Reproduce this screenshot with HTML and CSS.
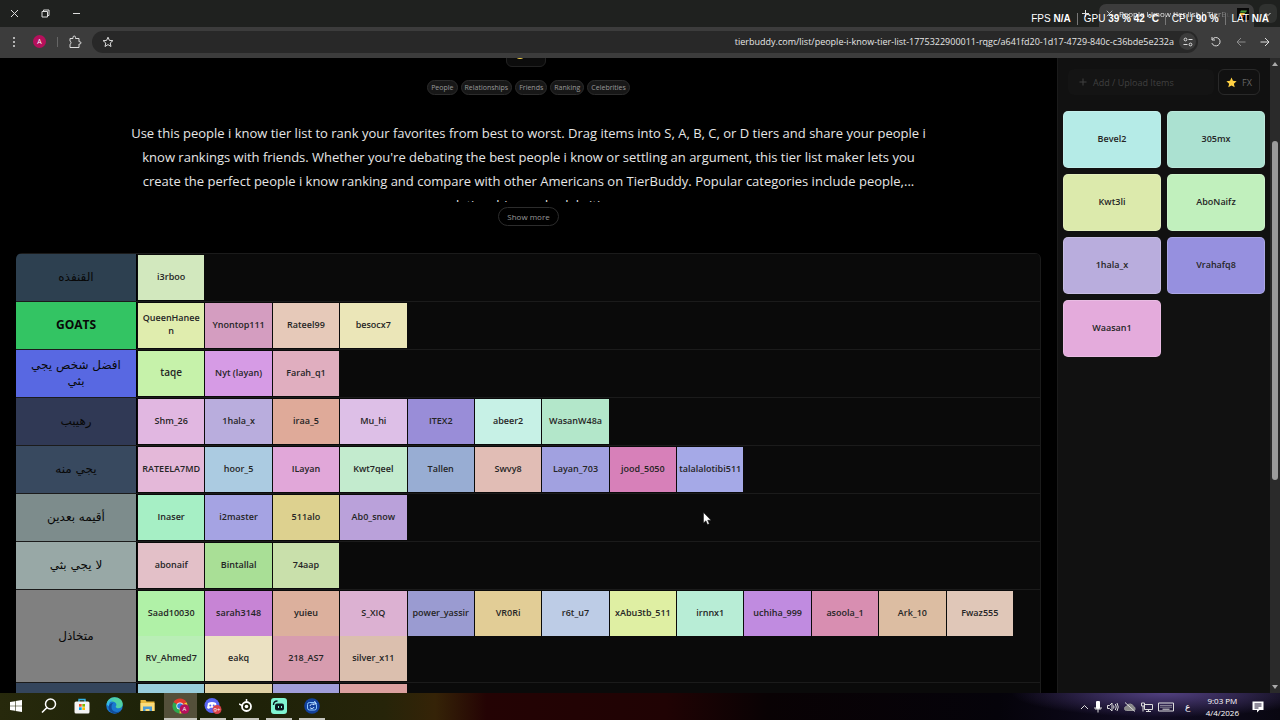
FILE: index.html
```
<!DOCTYPE html>
<html lang="en">
<head>
    <meta charset="UTF-8">
    <meta name="viewport" content="width=device-width, initial-scale=1.0">
    <title>People I know tier list | TierBuddy</title>
    <link rel="stylesheet" href="styles.css">
</head>
<body>
    <header class="titlebar">
        <div class="window-buttons">
            <button aria-label="Close"><svg width="9" height="9" viewBox="0 0 9 9"><path d="M1 1l7 7M8 1l-7 7"/></svg></button>
            <button aria-label="Restore"><svg width="9" height="9" viewBox="0 0 9 9"><path d="M1 2.5h5.500v5.500h-5.500zM2.500 2.500v-1.500h5.500v5.500h-1.500"/></svg></button>
            <button aria-label="Minimize"><svg width="9" height="9" viewBox="0 0 9 9"><path d="M1 4.500h7"/></svg></button>
        </div>
        <div class="tabs">
            <button class="new-tab" aria-label="New tab"><svg width="9" height="9" viewBox="0 0 9 9"><path d="M4.500 1v7M1 4.500h7"/></svg></button>
            <div class="tab">
                <button aria-label="Close tab"><svg width="7" height="7" viewBox="0 0 9 9"><path d="M1 1l7 7M8 1l-7 7"/></svg></button>
                <span class="tab-title">People I know tier list | TierBuddy</span>
                <svg class="favicon" width="12" height="12" viewBox="0 0 12 12"><rect width="12" height="12" fill="#080808"/><path d="M4 2.500h6l-1 2h-6z" fill="#4a9a3a"/><path d="M3 5h5l-1 2h-5z" fill="#e8b830"/><path d="M4 7.500h3l-1 2h-2z" fill="#d04a2a"/></svg>
            </div>
            <button class="tab-search" aria-label="Search tabs"><svg width="8" height="8" viewBox="0 0 8 8"><path d="M1.500 3l2.500 2.500 2.500-2.500"/></svg></button>
        </div>
        <div class="overlay">
            <span>FPS <b>N/A</b></span><i></i>
            <span>GPU <b>39 % 42 °C</b></span><i></i>
            <span>CPU <b>90 %</b></span><i></i>
            <span>LAT <b>N/A</b></span>
        </div>
    </header>

    <div class="toolbar">
        <button aria-label="Menu"><svg width="12" height="12" viewBox="0 0 12 12"><g fill="#ddd" stroke="none"><circle cx="6" cy="2" r="1"/><circle cx="6" cy="6" r="1"/><circle cx="6" cy="10" r="1"/></g></svg></button>
        <button class="avatar">A</button>
        <span class="divider"></span>
        <button aria-label="Extensions"><svg width="14" height="14" viewBox="0 0 14 14"><path d="M2 3.500h3v-1.200a1 1 0 0 1 2.500 0v1.200h3.500v3.200h.8a1 1 0 0 1 0 2.300h-.8v3.500h-9v-3.300a1.600 1.600 0 0 0 0-3z"/></svg></button>
        <div class="address">
            <button aria-label="Bookmark"><svg width="12" height="12" viewBox="0 0 12 12"><path d="M6 1.200l1.400 3.200 3.500.3-2.700 2.300.8 3.500-3-1.900-3 1.900.8-3.500-2.700-2.300 3.500-.3z"/></svg></button>
            <input type="text" aria-label="Address" value="tierbuddy.com/list/people-i-know-tier-list-1775322900011-rqgc/a641fd20-1d17-4729-840c-c36bde5e232a">
            <button class="site-info" aria-label="Site information"><svg width="10" height="10" viewBox="0 0 10 10"><path d="M5.500 2.500h4M.5 7.500h4"/><circle cx="2.500" cy="2.500" r="1.400"/><circle cx="7.500" cy="7.500" r="1.400"/></svg></button>
        </div>
        <button aria-label="Reload"><svg width="12" height="12" viewBox="0 0 12 12"><path d="M2.300 3.500a4.200 4.200 0 1 1-.4 3.600M2 1v3h3"/></svg></button>
        <button class="disabled" aria-label="Forward"><svg width="10" height="10" viewBox="0 0 10 10"><path d="M9.500 5h-8.500M5 1l-4 4 4 4"/></svg></button>
        <button aria-label="Back"><svg width="10" height="10" viewBox="0 0 10 10"><path d="M.5 5h8.500M5 1l4 4-4 4"/></svg></button>
    </div>

    <div class="page">
        <main>
            <button class="emoji" aria-label="Reactions"><svg width="12" height="12" viewBox="0 0 10 10"><circle cx="5" cy="5" r="5" fill="#f2d04a"/><path d="M2.500 6q2.500 2.500 5 0" stroke="#6b4a10"/></svg></button>
            <div class="tags">
                <a href="#people">People</a>
                <a href="#relationships">Relationships</a>
                <a href="#friends">Friends</a>
                <a href="#ranking">Ranking</a>
                <a href="#celebrities">Celebrities</a>
            </div>
            <p class="description">Use this people i know tier list to rank your favorites from best to worst. Drag items into S, A, B, C, or D tiers and share your people i<br>know rankings with friends. Whether you're debating the best people i know or settling an argument, this tier list maker lets you<br>create the perfect people i know ranking and compare with other Americans on TierBuddy. Popular categories include people,...<br>relationships and celebrities</p>
            <button class="show-more">Show more</button>
            <div class="tiers" id="tiers"></div>
        </main>
        <aside>
            <div class="actions">
                <button class="add"><svg width="8" height="8" viewBox="0 0 8 8"><path d="M4 .5v7M.5 4h7"/></svg>Add / Upload Items</button>
                <button class="fx"><svg width="11" height="11" viewBox="0 0 12 12"><path d="M6 .5l1.600 3.700 4 .4-3 2.700.9 4-3.500-2.100-3.500 2.100.9-4-3-2.700 4-.4z" fill="#ffd043" stroke="none"/></svg>FX</button>
            </div>
            <div class="pool" id="pool"></div>
        </aside>
        <div class="scrollbar"><span class="up"></span><span class="thumb"></span><span class="down"></span></div>
    </div>

    <footer class="taskbar">
        <div class="apps">
            <button aria-label="Start"><svg width="12" height="12" viewBox="0 0 12 12"><path d="M0 2l5-.8v4.500h-5zM5.600 1.100l6.400-1.100v5.700h-6.400zM0 6.300h5v4.500l-5-.8zM5.600 6.300h6.400v5.700l-6.400-1.100z" fill="#fff" stroke="none"/></svg></button>
            <button aria-label="Search"><svg width="16" height="16" viewBox="0 0 16 16"><circle cx="9.500" cy="6" r="5" stroke="#fff" stroke-width="1.500"/><path d="M6 9.500l-5 5" stroke="#fff" stroke-width="1.600"/></svg></button>
            <button aria-label="Store"><svg width="16" height="16" viewBox="0 0 16 16"><path d="M5 4v-2.500h6v2.500" stroke="#35b4e8" stroke-width="1.400"/><rect x=".5" y="3.500" width="15" height="12" rx="1.500" fill="#f4f4f4"/><path d="M5 6h2.700v2.700h-2.700z" fill="#f25022"/><path d="M8.300 6h2.700v2.700h-2.700z" fill="#7fba00"/><path d="M5 9.300h2.700v2.700h-2.700z" fill="#00a4ef"/><path d="M8.300 9.300h2.700v2.700h-2.700z" fill="#ffb900"/></svg></button>
            <button aria-label="Edge"><svg width="17" height="17" viewBox="0 0 16 16"><circle cx="8" cy="8" r="7.800" fill="#1a78cf"/><path d="M.5 7c.5-4 3.700-6.800 7.500-6.800 4.600 0 7.800 3 7.800 6.500 0 2.600-2 4-4 4-1.700 0-2.700-.7-2.700-1.500 0-.5.700-.8.700-2 0-1.700-1.700-3-4-3-2.500 0-4.300 1-5.300 2.800z" fill="#4fd1a5"/><path d="M.5 7c1-3.500 4-5 7.500-4.500-4 .5-5.500 3.500-5 6.500z" fill="#35b8e8"/><path d="M7 5.500c-2.500 2-2.500 6 .5 8 2 1.200 4.500.8 6.500-1-2.500 4-8 4-10.500.5-2.500-3.500-.5-7 3.500-7.500z" fill="#124d9a"/></svg></button>
            <button aria-label="Files"><svg width="15" height="13" viewBox="0 0 15 13"><path d="M.5 1h5l1 1.500h8v9.500h-14z" fill="#e9b93c"/><path d="M.5 4h14v8h-14z" fill="#fbdc7a"/><path d="M3 12v-4.500h9v4.500h-2.500v-2h-4v2z" fill="#4a9ad4"/></svg></button>
            <button class="active" aria-label="Chrome"><svg width="18" height="16" viewBox="0 0 18 16"><path d="M8 8l-6.500-3.800a7.500 7.500 0 0 1 13 0z" fill="#e33b2e"/><path d="M8 8h0l-6.500-3.800a7.500 7.500 0 0 0 6 11.300z" fill="#2da94f"/><path d="M8 8l6.500-3.800a7.500 7.500 0 0 1-7 11.300z" fill="#fcc934"/><circle cx="8" cy="8" r="3.600" fill="#fff"/><circle cx="8" cy="8" r="2.800" fill="#2f7de1"/><circle cx="12.500" cy="11" r="4.800" fill="#b5105c"/><text x="12.500" y="13" font-size="6" fill="#fff" text-anchor="middle">A</text></svg></button>
            <button class="open" aria-label="Discord"><svg width="18" height="16" viewBox="0 0 18 16"><circle cx="8" cy="7.500" r="7.500" fill="#5865f2"/><path d="M4 5q4-2 8 0l1 5-2 1-1-1.200h-4l-1 1.200-2-1z" fill="#fff"/><circle cx="6.300" cy="7.500" r="1" fill="#5865f2"/><circle cx="9.700" cy="7.500" r="1" fill="#5865f2"/><circle cx="13" cy="11.500" r="4.500" fill="#d8404a"/><text x="13" y="14" font-size="6" fill="#fff" text-anchor="middle">9+</text></svg></button>
            <button class="open" aria-label="SteelSeries"><svg width="14" height="14" viewBox="0 0 14 14"><circle cx="7.500" cy="7.500" r="4.500" stroke="#fff" stroke-width="1.800"/><circle cx="7.500" cy="7.500" r="1.800" fill="#fff"/><path d="M7.500 0v3M0 5l4 2" stroke="#fff" stroke-width="1.500"/></svg></button>
            <button class="open" aria-label="Streamlabs"><svg width="16" height="16" viewBox="0 0 16 16"><rect width="16" height="16" rx="3" fill="#80f5d2"/><path d="M2.500 7q0-4 4-4" stroke="#09161d" stroke-width="1.400"/><rect x="4" y="5.500" width="9" height="7" rx="2" fill="#09161d"/><path d="M7.500 8v2M10.500 8v2" stroke="#80f5d2"/></svg></button>
            <button class="open" aria-label="Camera"><svg width="16" height="16" viewBox="0 0 16 16"><circle cx="8" cy="8" r="7.800" fill="#12419c"/><rect x="3.500" y="4.500" width="9" height="7.500" rx="2" stroke="#8cc8ff"/><path d="M6 8a2.200 2.200 0 0 1 4-1M10 9a2.200 2.200 0 0 1-4 .5M10.500 3l1.500 3h-3" stroke="#c5e4ff"/></svg></button>
        </div>
        <div class="tray">
            <svg width="9" height="6" viewBox="0 0 9 6"><path d="M1 5l3.500-3.500 3.500 3.500"/></svg>
            <svg width="8" height="12" viewBox="0 0 8 12"><rect x="2" y="0" width="4" height="8" rx="1" fill="#fff"/><path d="M1 6v2h6v-2M4 8v3.500"/></svg>
            <svg width="12" height="10" viewBox="0 0 12 10"><path d="M.5 3.500h2l2.500-2.500v8l-2.500-2.500h-2zM6.500 3.500q1 1.500 0 3M8.300 2q2 3 0 6M10 1q2.500 4 0 8"/></svg>
            <svg width="12" height="10" viewBox="0 0 12 10"><path d="M2.500 8.500a2 2 0 0 1 0-4q1-3 4-2.500 2.500.5 3 2.500 2 .5 1.500 3-.5 1-1.500 1z" fill="#888" stroke="#999"/><path d="M1 .5l10 9"/></svg>
            <svg width="12" height="10" viewBox="0 0 12 10"><path d="M3.500 2.500h8v5h-8zM7.500 7.500v2M5 9.500h5M.5 1h3v3h-3zM2 4v5.500"/></svg>
            <svg width="16" height="10" viewBox="0 0 16 10"><path d="M.5 1h15v8h-15z"/><path d="M2.500 3.500h11M2.500 5.200h11" stroke-dasharray="1 1"/><path d="M4.500 7.200h7"/></svg>
            <span class="lang">ع</span>
            <time>9:03 PM<br>4/4/2026</time>
            <svg width="12" height="12" viewBox="0 0 12 12"><path d="M.5.500h11v8.500h-4l-2.500 2.500v-2.500h-4.500z" fill="#fff"/><path d="M2.500 3h7M2.500 5h7M2.500 7h4" stroke="#221a38"/></svg>
        </div>
    </footer>

    <svg class="cursor" width="9" height="14" viewBox="0 0 9 14"><path d="M.5.500v10.500l2.400-2.200 1.600 3.700 1.800-.8-1.600-3.500h3.300z" fill="#fff" stroke="#111" stroke-width=".5"/></svg>
    <script src="script.js"></script>
</body>
</html>
```
FILE: styles.css
```
* {
    box-sizing: border-box;
}
body {
    margin: 0;
    height: 100vh;
    display: flex;
    flex-direction: column;
    overflow: hidden;
    background-color: #000;
    color: #e6e6e6;
    font-family: "Open Sans", "Noto Sans", "DejaVu Sans", sans-serif;
    font-size: 9px;
}
button, input {
    font: inherit;
    color: inherit;
    background: none;
    border: 0;
    padding: 0;
}
button {
    display: flex;
    align-items: center;
    justify-content: center;
    flex-shrink: 0;
}
svg {
    display: block;
    flex-shrink: 0;
    fill: none;
    stroke: #ddd;
    stroke-width: 1;
}
svg [fill]:not([stroke]), svg text {
    stroke: none;
}

/* browser window */
.titlebar {
    position: relative;
    display: flex;
    justify-content: space-between;
    height: 27px;
    flex-shrink: 0;
    background-color: #1f211f;
}
.window-buttons {
    display: flex;
    align-items: center;
    gap: 22px;
    padding-left: 10px;
}
.tabs {
    display: flex;
    padding: 4px 3px 0 0;
}
.new-tab {
    width: 28px;
    height: 18px;
}
.tab {
    display: flex;
    align-items: center;
    gap: 6px;
    width: 155px;
    padding: 0 5px 4px 7px;
    border-radius: 7px 7px 0 0;
    background-color: #3c3c3c;
}
.tab-title {
    flex: 1;
    overflow: hidden;
    white-space: nowrap;
    font-size: 8px;
    mask-image: linear-gradient(to right, #000 80%, transparent);
}
.tab-search {
    width: 18px;
    height: 19px;
    margin-left: 5px;
    border-radius: 6px;
    background-color: #303230;
}
.overlay {
    position: absolute;
    top: 11px;
    right: 11px;
    display: flex;
    align-items: center;
    gap: 6px;
    font-family: "Liberation Sans", sans-serif;
    font-size: 10px;
    line-height: 15px;
    color: #fff;
}
.overlay i {
    width: 1px;
    height: 12px;
    background-color: #777;
}
.toolbar {
    display: flex;
    align-items: center;
    height: 31px;
    flex-shrink: 0;
    padding: 0 10px 2px 8px;
    background-color: #3c3c3c;
    gap: 14px;
}
.avatar {
    width: 13px;
    height: 13px;
    margin-left: -1px;
    border-radius: 50%;
    background-color: #b5105c;
    color: #fff;
    font-size: 7px;
}
.divider {
    width: 1px;
    height: 10px;
    margin-left: -3px;
    background-color: #666;
}
.toolbar .divider + button {
    margin-left: -4px;
}
.address {
    flex: 1;
    display: flex;
    align-items: center;
    height: 22px;
    margin: 0 -2px 0 -4px;
    padding: 0 2px 0 10px;
    border-radius: 11px;
    background-color: #282828;
}
.address input {
    flex: 1;
    min-width: 0;
    padding-right: 5px;
    text-align: right;
    font-size: 9px;
}
.site-info {
    width: 17px;
    height: 17px;
    border-radius: 50%;
    background-color: #3c3c3c;
}
.disabled {
    opacity: 0.5;
}

/* page */
.page {
    flex: 1;
    min-height: 0;
    display: flex;
}
main {
    flex: 1;
    min-width: 0;
    display: flex;
    flex-direction: column;
    align-items: center;
    overflow: hidden;
    padding: 0 16px;
}
.emoji {
    justify-content: flex-start;
    width: 40px;
    height: 28px;
    margin-top: -19px;
    margin-right: 5px;
    padding-left: 7px;
    flex-shrink: 0;
    border: 1px solid #222;
    border-radius: 6px;
    background-color: #0c0c0c;
}
.tags {
    display: flex;
    gap: 3px;
    margin-top: 13px;
}
.tags a {
    padding: 0 3px;
    border: 1px solid #2c2c2c;
    border-radius: 8px;
    background-color: #171717;
    color: #999;
    font-size: 7px;
    line-height: 13px;
    text-decoration: none;
}
.description {
    height: 81px;
    margin: 26px 0 0;
    flex-shrink: 0;
    overflow: hidden;
    text-align: center;
    white-space: nowrap;
    font-size: 13px;
    line-height: 24px;
}
.show-more {
    height: 19px;
    margin: 5px 0 27px;
    padding: 0 8px;
    border: 1px solid #2c2c2c;
    border-radius: 10px;
    color: #999;
    font-size: 8px;
}
.tiers {
    width: 100%;
    flex-shrink: 0;
    border-right: 1px solid #1b1b1b;
    border-radius: 6px 6px 0 0;
    overflow: hidden;
    background-color: #0a0a0a;
}
.tier {
    display: flex;
    border-top: 1px solid #1b1b1b;
}
.tier h2 {
    display: flex;
    align-items: center;
    justify-content: center;
    width: 120px;
    margin: 0;
    padding: 0 12px 1px;
    flex-shrink: 0;
    color: #080808;
    text-align: center;
    font-size: 12px;
    font-weight: 700;
    line-height: 16px;
}
.tier h2:lang(ar) {
    font-family: "DejaVu Sans", sans-serif;
    font-weight: 400;
}
.tier-items {
    flex: 1;
    display: grid;
    grid-template-columns: repeat(13, 1fr);
    column-gap: 1px;
    padding: 1px 27px 1px 1px;
    border-left: 1px solid #000;
}
.item {
    display: flex;
    align-items: center;
    justify-content: center;
    min-width: 0;
    height: 45px;
    padding: 0 2px 3px;
    color: #252525;
    text-align: center;
    white-space: pre;
    font-size: 9px;
    font-weight: 600;
    line-height: 13px;
}
.large {
    font-size: 10px;
}
aside {
    width: 213px;
    flex-shrink: 0;
    padding: 11px 5px 0;
    border-left: 1px solid #1b1b1b;
    background-color: #111;
}
.actions {
    display: flex;
    gap: 4px;
    padding: 0 5px;
}
.add {
    flex: 1;
    justify-content: flex-start;
    gap: 6px;
    padding-left: 11px;
    border-radius: 6px;
    background-color: #141414;
    color: #404040;
    font-size: 9px;
}
.add svg {
    stroke: #404040;
}
.fx {
    gap: 5px;
    width: 42px;
    height: 26px;
    border: 1px solid #292929;
    border-radius: 6px;
    color: #666;
    font-size: 9px;
}
.pool {
    display: grid;
    grid-template-columns: 1fr 1fr;
    gap: 6px;
    margin-top: 16px;
}
.pool .item {
    height: 57px;
    border: 1px solid rgba(255, 255, 255, 0.2);
    border-radius: 5px;
}
.scrollbar {
    display: flex;
    flex-direction: column;
    align-items: center;
    width: 10px;
    padding: 4px 0;
    background-color: #2a2a2a;
}
.up, .down {
    border: 3px solid transparent;
    border-top: 0;
    border-bottom: 4px solid #aaa;
}
.down {
    margin-top: auto;
    transform: rotate(180deg);
}
.thumb {
    width: 6px;
    height: 54%;
    margin-top: 75px;
    border-radius: 3px;
    background-color: #9b9b9b;
}

/* taskbar */
.taskbar {
    display: flex;
    justify-content: space-between;
    height: 27px;
    flex-shrink: 0;
    background:
        radial-gradient(ellipse 12% 90% at 91% 0, #51407f, transparent),
        linear-gradient(to right, #27290c 0, #1b2108 15%, #262409 30%, #352307 34%, #240304 38%, #200304 52%, #090204 60%, #05030a 78%, #100b22 90%, #090711 100%);
}
.apps {
    display: flex;
}
.apps button {
    width: 33px;
    border-bottom: 2px solid transparent;
}
.apps button:first-child {
    width: 32px;
}
.apps .open {
    width: 26px;
    margin-right: 7px;
    border-bottom-color: #c5c5bd;
}
.apps .active {
    margin-right: 3px;
    border-bottom-color: #c5c5bd;
    background-color: #54503a;
}
.tray {
    display: flex;
    align-items: center;
    gap: 5px;
    padding-right: 16px;
    color: #fff;
}
.lang {
    width: 18px;
    margin-right: 4px;
    text-align: center;
}
time {
    margin-right: 8px;
    text-align: center;
    font-size: 8px;
    line-height: 12px;
}
.cursor {
    position: absolute;
    left: 703px;
    top: 512px;
}
```
FILE: script.js
```
const tiers = [
    ['القنفذه', '#2d4050', [['i3rboo', '#d2e8be']]],
    ['GOATS', '#33c463', [['QueenHanee\nn', '#e0edae'], ['Ynontop111', '#d49dc0'], ['Rateel99', '#e6c9b9'], ['besocx7', '#ebe6b8']]],
    ['افضل شخص يجي بثي', '#5868e2', [['taqe', '#c6f2aa', 'large'], ['Nyt (layan)', '#d69be5'], ['Farah_q1', '#e0aebf']]],
    ['رهيبب', '#303955', [['Shm_26', '#e1b7e1'], ['1hala_x', '#b9addd'], ['iraa_5', '#dfaa99'], ['Mu_hi', '#ddbfe7'], ['ITEX2', '#998dd8'], ['abeer2', '#c7f1e6'], ['WasanW48a', '#b3e7ca']]],
    ['يجي منه', '#38495f', [['RATEELA7MD', '#e4b8d9'], ['hoor_5', '#abcbe1'], ['ILayan', '#e1a7d9'], ['Kwt7qeel', '#c3ebce'], ['Tallen', '#98add3'], ['Swvy8', '#e1bdb5'], ['Layan_703', '#a1a1e0'], ['jood_5050', '#d780b9'], ['talalalotibi511', '#a5a9e7']]],
    ['أقيمه بعدين', '#7d8c8c', [['Inaser', '#a6efc5'], ['i2master', '#a5a3e3'], ['511alo', '#ddd18f'], ['Ab0_snow', '#baa1da']]],
    ['لا يجي بثي', '#98a8a6', [['abonaif', '#e3c0c8'], ['Bintallal', '#a9df96'], ['74aap', '#c9e0ab']]],
    ['متخاذل', '#808080', [['Saad10030', '#b0f1a7'], ['sarah3148', '#c784d5'], ['yuieu', '#dcb09d'], ['S_XIQ', '#dcb1d2'], ['power_yassir', '#9a9bd1'], ['VR0Ri', '#e2cd96'], ['r6t_u7', '#bdcce6'], ['xAbu3tb_511', '#dfefa3'], ['irnnx1', '#b8edd6'], ['uchiha_999', '#c08be0'], ['asoola_1', '#d88eb1'], ['Ark_10', '#dcbda2'], ['Fwaz555', '#e0c7b8'], ['RV_Ahmed7', '#b9eeb6'], ['eakq', '#ebe1c2'], ['218_AS7', '#d79caf'], ['silver_x11', '#dbbfae']]],
    ['', '#34455c', [['', '#98cddb'], ['', '#e0d1a5'], ['', '#a19eda'], ['', '#dba09f']]]
];

const pool = [['Bevel2', '#b5ebe7'], ['305mx', '#abe1d1'], ['Kwt3li', '#dceaac'], ['AboNaifz', '#c1f0bd'], ['1hala_x', '#b9addd'], ['Vrahafq8', '#9690df'], ['Waasan1', '#e4abdc']];

function createItem(item) {
    const div = document.createElement('div');
    div.className = 'item ' + (item[2] || '');
    div.style.backgroundColor = item[1];
    const label = document.createElement('span');
    label.textContent = item[0];
    div.appendChild(label);
    return div;
}

tiers.forEach(function(tier) {
    const row = document.createElement('section');
    row.className = 'tier';
    const title = document.createElement('h2');
    title.textContent = tier[0];
    title.style.backgroundColor = tier[1];
    if (tier[0] !== 'GOATS') {
        title.lang = 'ar';
        title.dir = 'rtl';
    }
    const items = document.createElement('div');
    items.className = 'tier-items';
    tier[2].forEach(function(item) {
        items.appendChild(createItem(item));
    });
    row.append(title, items);
    document.getElementById('tiers').appendChild(row);
});

pool.forEach(function(item) {
    document.getElementById('pool').appendChild(createItem(item));
});
```
